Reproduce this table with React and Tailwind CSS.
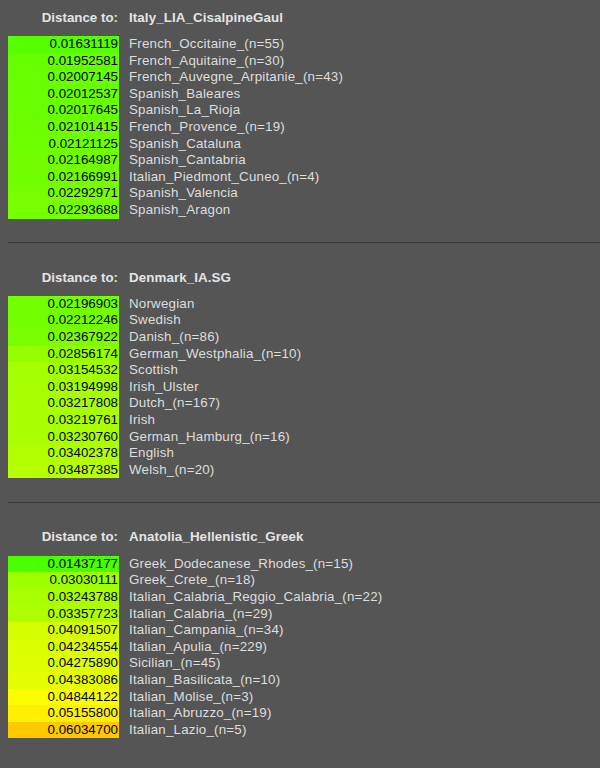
import React from "react";

const sections = [
  {
    target: "Italy_LIA_CisalpineGaul",
    rows: [
      ["0.01631119", "French_Occitaine_(n=55)"],
      ["0.01952581", "French_Aquitaine_(n=30)"],
      ["0.02007145", "French_Auvegne_Arpitanie_(n=43)"],
      ["0.02012537", "Spanish_Baleares"],
      ["0.02017645", "Spanish_La_Rioja"],
      ["0.02101415", "French_Provence_(n=19)"],
      ["0.02121125", "Spanish_Cataluna"],
      ["0.02164987", "Spanish_Cantabria"],
      ["0.02166991", "Italian_Piedmont_Cuneo_(n=4)"],
      ["0.02292971", "Spanish_Valencia"],
      ["0.02293688", "Spanish_Aragon"],
    ],
  },
  {
    target: "Denmark_IA.SG",
    rows: [
      ["0.02196903", "Norwegian"],
      ["0.02212246", "Swedish"],
      ["0.02367922", "Danish_(n=86)"],
      ["0.02856174", "German_Westphalia_(n=10)"],
      ["0.03154532", "Scottish"],
      ["0.03194998", "Irish_Ulster"],
      ["0.03217808", "Dutch_(n=167)"],
      ["0.03219761", "Irish"],
      ["0.03230760", "German_Hamburg_(n=16)"],
      ["0.03402378", "English"],
      ["0.03487385", "Welsh_(n=20)"],
    ],
  },
  {
    target: "Anatolia_Hellenistic_Greek",
    rows: [
      ["0.01437177", "Greek_Dodecanese_Rhodes_(n=15)"],
      ["0.03030111", "Greek_Crete_(n=18)"],
      ["0.03243788", "Italian_Calabria_Reggio_Calabria_(n=22)"],
      ["0.03357723", "Italian_Calabria_(n=29)"],
      ["0.04091507", "Italian_Campania_(n=34)"],
      ["0.04234554", "Italian_Apulia_(n=229)"],
      ["0.04275890", "Sicilian_(n=45)"],
      ["0.04383086", "Italian_Basilicata_(n=10)"],
      ["0.04844122", "Italian_Molise_(n=3)"],
      ["0.05155800", "Italian_Abruzzo_(n=19)"],
      ["0.06034700", "Italian_Lazio_(n=5)"],
    ],
  },
];

// green -> yellow -> orange scale taken from the distance
const distColor = (value) => {
  const d = parseFloat(value);
  const r = Math.min(255, Math.round(d * 5200));
  const g = d > 0.048 ? Math.max(0, Math.round(255 - (d - 0.048) * 4400)) : 255;
  return `rgb(${r}, ${g}, 0)`;
};

const Section = ({ target, rows, first, last }) => (
  <div
    className={
      (first ? "pt-[9.6px] " : "pt-[26.6px] ") +
      (last ? "" : "pb-[23.4px] border-b border-[#383838] ml-[8px]")
    }
  >
    <div className={last ? "" : "-ml-[8px]"}>
      <div className="flex leading-[16.6px] font-bold text-[#e4e4e4]">
        <div className="w-[119px] text-right pr-[1px]">Distance to:</div>
        <div className="pl-[10px] tracking-[0.1px]">{target}</div>
      </div>
      <div className="mt-[9.8px]">
        {rows.map(([dist, name]) => (
          <div key={name} className="flex leading-[16.6px]">
            <div
              className="ml-[8px] w-[111px] text-right pr-[1px] text-black"
              style={{ backgroundColor: distColor(dist) }}
            >
              {dist}
            </div>
            <div className="pl-[10px] text-[#dedede] whitespace-nowrap tracking-[0.2px]">{name}</div>
          </div>
        ))}
      </div>
    </div>
  </div>
);

export default function App() {
  return (
    <div className="min-h-[768px] w-[600px] bg-[#555555] text-[13.33px] font-['Liberation_Sans',Arial,sans-serif] overflow-hidden">
      {sections.map((s, i) => (
        <Section
          key={s.target}
          {...s}
          first={i === 0}
          last={i === sections.length - 1}
        />
      ))}
    </div>
  );
}
